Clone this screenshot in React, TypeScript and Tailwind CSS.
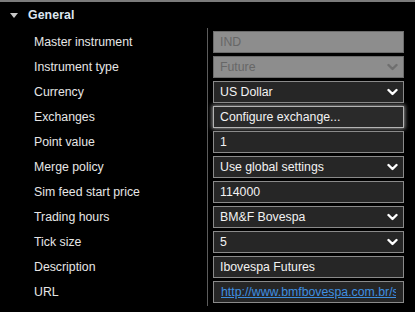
const Chevron = ({ disabled = false }: { disabled?: boolean }) => (
  <svg
    width="11"
    height="8"
    viewBox="0 0 11 8"
    fill="none"
    stroke={disabled ? "#6f6f6f" : "#ffffff"}
    strokeWidth="2.4"
    strokeLinecap="round"
    strokeLinejoin="round"
    className="absolute right-[5px] top-1/2 -translate-y-1/2"
  >
    <path d="M1.5 2l4 4 4-4" />
  </svg>
);

type Field = {
  label: string;
  value: string;
  kind: "text" | "select" | "button" | "link";
  disabled?: boolean;
};

const FIELDS: Field[] = [
  { label: "Master instrument", value: "IND", kind: "text", disabled: true },
  { label: "Instrument type", value: "Future", kind: "select", disabled: true },
  { label: "Currency", value: "US Dollar", kind: "select" },
  { label: "Exchanges", value: "Configure exchange...", kind: "button" },
  { label: "Point value", value: "1", kind: "text" },
  { label: "Merge policy", value: "Use global settings", kind: "select" },
  { label: "Sim feed start price", value: "114000", kind: "text" },
  { label: "Trading hours", value: "BM&F Bovespa", kind: "select" },
  { label: "Tick size", value: "5", kind: "select" },
  { label: "Description", value: "Ibovespa Futures", kind: "text" },
  { label: "URL", value: "http://www.bmfbovespa.com.br/shared/iframe.aspx", kind: "link" },
];

function FieldInput({ field }: { field: Field }) {
  if (field.disabled) {
    return (
      <div className="relative flex h-[22px] items-center overflow-hidden border border-[#6c6c6c] bg-[#8d8d8d] pl-[6px] text-[#676767]">
        <span>{field.value}</span>
        {field.kind === "select" && <Chevron disabled />}
      </div>
    );
  }
  if (field.kind === "button") {
    return (
      <div className="flex h-[22px] items-center border border-[#b4b4b4] bg-[#2a2a2a] pl-[6px] text-[#f2f2f2] shadow-[0_0_4px_1px_rgba(255,255,255,0.55)]">
        {field.value}
      </div>
    );
  }
  if (field.kind === "link") {
    return (
      <div className="flex h-[22px] items-center border border-[#8a8a8a] bg-[#262626] pl-[7px] pr-[7px]">
        <span className="block min-w-0 overflow-hidden whitespace-nowrap text-[#3f8fe0] underline">
          {field.value}
        </span>
      </div>
    );
  }
  return (
    <div className="relative flex h-[22px] items-center border border-[#8a8a8a] bg-[#262626] pl-[6px] text-[#f2f2f2]">
      <span>{field.value}</span>
      {field.kind === "select" && <Chevron />}
    </div>
  );
}

export default function App() {
  return (
    <div
      className="h-[312px] w-[415px] overflow-hidden border-t-2 border-[#7b7b7b] bg-black text-[12.3px]"
      style={{ fontFamily: '"Liberation Sans", Arial, sans-serif' }}
    >
      <div className="flex h-[26px] items-center pl-[10px] text-[#dde6f0]">
        <svg width="8" height="5" viewBox="0 0 8 5" className="mr-[10px] mt-[1px]">
          <path d="M0 0h8L4 5z" fill="#c8c8c8" />
        </svg>
        <span className="font-bold tracking-[0.1px]">General</span>
      </div>

      <div className="flex">
        <div className="w-[207px] shrink-0 pt-[3px]">
          {FIELDS.map((f) => (
            <div key={f.label} className="flex h-[25px] items-start">
              <div className="flex h-[22px] items-center whitespace-nowrap pl-[34px] text-[#e6e6e6]">
                {f.label}
              </div>
            </div>
          ))}
        </div>
        <div className="min-w-0 flex-1 border-l border-[#5c5c5c] pt-[3px] pl-[5px] pr-[11px]">
          {FIELDS.map((f) => (
            <div key={f.label} className="h-[25px]">
              <FieldInput field={f} />
            </div>
          ))}
        </div>
      </div>

      <div className="flex h-[26px] items-center pl-[10px] text-[#dde6f0]">
        <svg width="8" height="5" viewBox="0 0 8 5" className="mr-[10px] mt-[1px]">
          <path d="M0 0h8L4 5z" fill="#c8c8c8" />
        </svg>
        <span className="font-bold">Symbol map</span>
      </div>
    </div>
  );
}
